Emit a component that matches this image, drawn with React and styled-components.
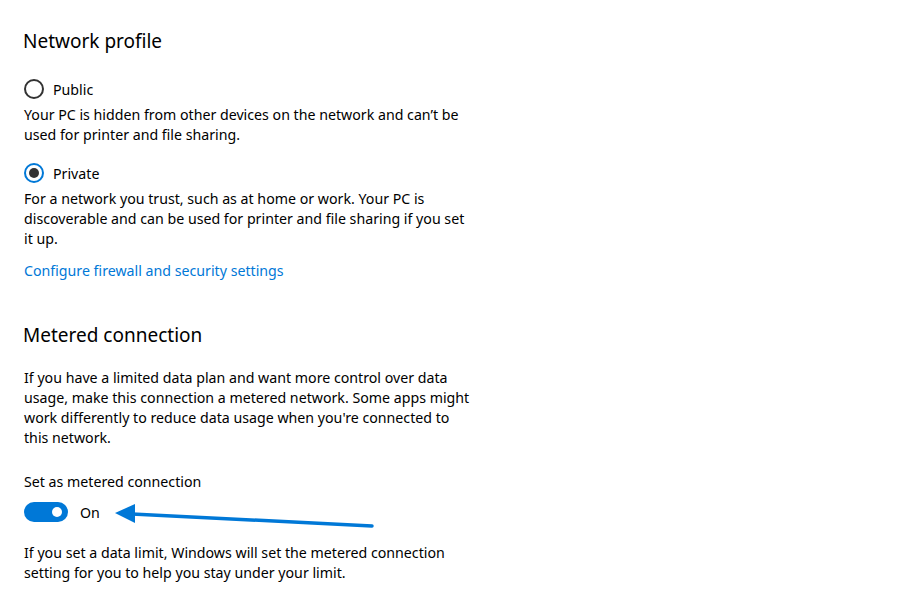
import styled, {createGlobalStyle} from "styled-components";

const GlobalStyle = createGlobalStyle`
  body {
    margin: 0;
    background: #ffffff;
    font-family: "Noto Sans", "Open Sans", sans-serif;
    color: #000000;
  }
`;

const Page = styled.main`
  padding: 27px 0 0 24px;
  width: 460px;
`;

const Section = styled.section`
  display: flex;
  flex-direction: column;
`;

const Heading = styled.h2`
  margin: 0;
  font-size: 19px;
  line-height: 28px;
  font-weight: 400;
  margin-left: -1px;
  margin-top: ${p => p.$top || 0}px;
`;

const Text = styled.p`
  margin: ${p => p.$top || 0}px 0 0 0;
  font-size: 14.2px;
  line-height: 20px;
  white-space: nowrap;
`;

const RadioRow = styled.label`
  display: flex;
  align-items: center;
  gap: 9px;
  height: 20px;
  margin-top: ${p => p.$top || 0}px;
  font-size: 14.2px;
`;

const RadioCircle = styled.span`
  box-sizing: border-box;
  width: 20px;
  height: 20px;
  border-radius: 50%;
  border: 2px solid ${p => (p.$checked ? "#0078d7" : "#333333")};
  display: flex;
  align-items: center;
  justify-content: center;

  &::after {
    content: "";
    width: 10px;
    height: 10px;
    border-radius: 50%;
    background: #333333;
    display: ${p => (p.$checked ? "block" : "none")};
  }
`;

const Link = styled.a`
  margin-top: 12px;
  font-size: 14.2px;
  line-height: 20px;
  color: #0078d7;
  text-decoration: none;
  white-space: nowrap;
`;

const ToggleRow = styled.div`
  position: relative;
  display: flex;
  align-items: center;
  gap: 12px;
  height: 20px;
  margin-top: 10px;
  font-size: 14.2px;
`;

const Switch = styled.span`
  box-sizing: border-box;
  width: 44px;
  height: 20px;
  border-radius: 10px;
  background: #0078d7;
  display: flex;
  align-items: center;
  justify-content: flex-end;
  padding-right: 6px;

  &::after {
    content: "";
    width: 10px;
    height: 10px;
    border-radius: 50%;
    background: #ffffff;
  }
`;

const Arrow = styled.svg`
  position: absolute;
  left: 88px;
  top: -3px;
  overflow: visible;
`;

function Radio({checked, children, top}) {
    return (
        <RadioRow $top={top}>
            <RadioCircle $checked={checked}/>
            <span>{children}</span>
        </RadioRow>
    );
}

export default function App() {
    return (
        <Page>
            <GlobalStyle/>
            <Section>
                <Heading>Network profile</Heading>

                <Radio top={24}>Public</Radio>
                <Text $top={6}>
                    Your PC is hidden from other devices on the network and can’t be<br/>
                    used for printer and file sharing.
                </Text>

                <Radio checked top={18}>Private</Radio>
                <Text $top={6}>
                    For a network you trust, such as at home or work. Your PC is<br/>
                    discoverable and can be used for printer and file sharing if you set<br/>
                    it up.
                </Text>

                <Link href="#">Configure firewall and security settings</Link>
            </Section>

            <Section>
                <Heading $top={40}>Metered connection</Heading>
                <Text $top={19}>
                    If you have a limited data plan and want more control over data<br/>
                    usage, make this connection a metered network. Some apps might<br/>
                    work differently to reduce data usage when you're connected to<br/>
                    this network.
                </Text>

                <Text $top={24}>Set as metered connection</Text>
                <ToggleRow>
                    <Switch/>
                    <span>On</span>
                    {/* annotation arrow pointing at the toggle */}
                    <Arrow width="270" height="30" viewBox="0 0 270 30">
                        <polygon points="3,14 23,5 23,24" fill="#0078d7"/>
                        <line x1="20" y1="15" x2="260" y2="27" stroke="#0078d7" strokeWidth="3.5" strokeLinecap="round"/>
                    </Arrow>
                </ToggleRow>
                <Text $top={21}>
                    If you set a data limit, Windows will set the metered connection<br/>
                    setting for you to help you stay under your limit.
                </Text>
            </Section>
        </Page>
    );
}
